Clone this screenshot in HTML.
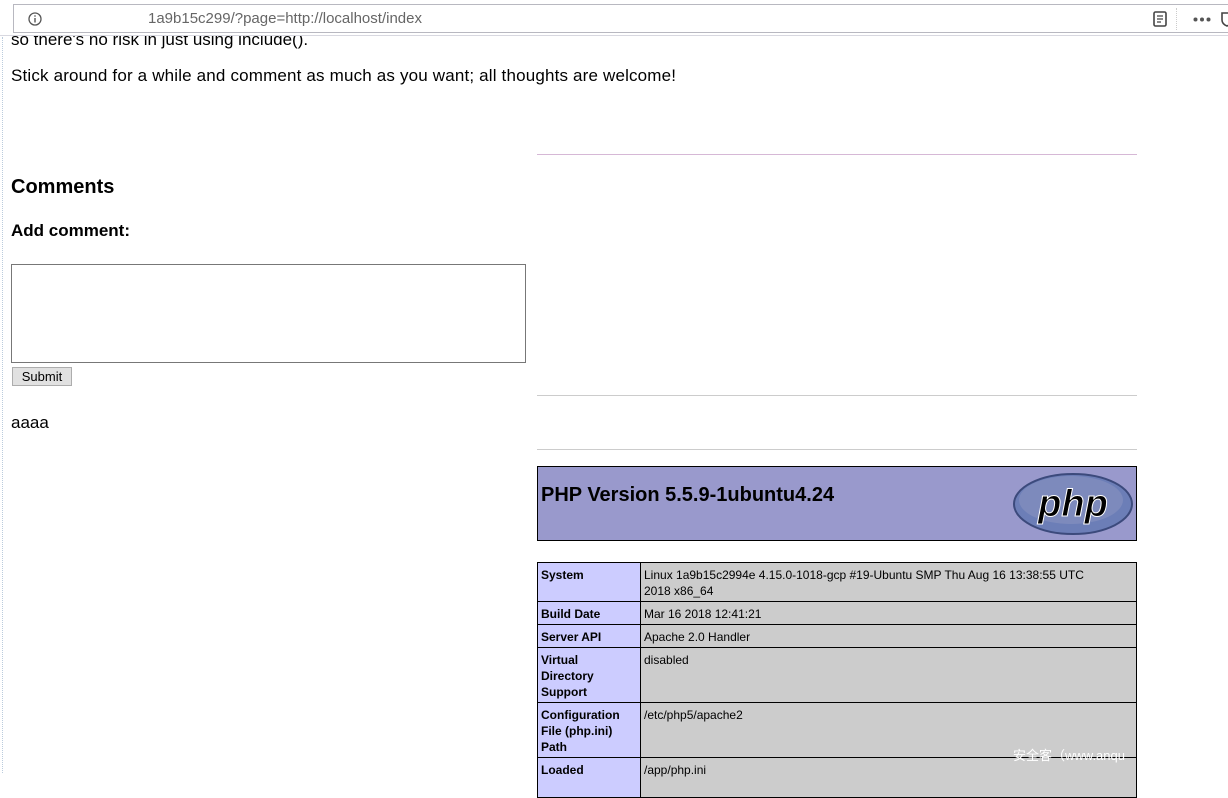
<!DOCTYPE html>
<html><head><meta charset="utf-8"><style>
*{margin:0;padding:0;box-sizing:border-box}
body{width:1228px;height:773px;overflow:hidden;background:#fff;font-family:"Liberation Sans","Noto Sans CJK SC",sans-serif;color:#000;position:relative}
.a{position:absolute;white-space:nowrap}
.bar{position:absolute;left:0;top:0;width:1228px;height:36px;background:#fff;border-bottom:1px solid #d8d8e0}
.url{position:absolute;left:13px;top:4px;width:1215px;height:29px;border:1px solid #b8b8c0;border-right:none;background:#fff}
.hr{position:absolute;left:537px;width:600px;height:1px}
table{position:absolute;left:537px;top:562px;width:600px;border-collapse:collapse;font-size:12px;table-layout:fixed}
td{border:1px solid #000;vertical-align:top;padding:4px 3px 2px 3px;line-height:16px}
td.e{background:#ccccff;font-weight:bold}
td.v{background:#cccccc}
</style></head><body>
<div class="a" style="left:11px;top:30px;font-size:17px">so there's no risk in just using include().</div>
<div class="bar"><div class="url">
<svg style="position:absolute;left:14px;top:7px" width="14" height="14" viewBox="0 0 14 14"><circle cx="7" cy="7" r="6" fill="none" stroke="#555" stroke-width="1.3"/><rect x="6.3" y="6" width="1.4" height="4.5" fill="#555"/><rect x="6.3" y="3.3" width="1.4" height="1.4" fill="#555"/></svg>
<div class="a" style="left:134px;top:5px;font-size:15px;color:#666">1a9b15c299/?page=http://localhost/index</div>
<svg style="position:absolute;left:1139px;top:6px" width="15" height="16" viewBox="0 0 15 16"><rect x="1" y="1" width="12" height="14" rx="1.5" fill="none" stroke="#444" stroke-width="1.6"/><path d="M4 5h6M4 8h6M4 11h4" stroke="#444" stroke-width="1.3"/></svg>
<div class="a" style="left:1162px;top:3px;width:1px;height:22px;border-left:1px dotted #ccc"></div>
<svg style="position:absolute;left:1179px;top:12px" width="18" height="5" viewBox="0 0 18 5"><circle cx="2.5" cy="2.5" r="2" fill="#555"/><circle cx="9" cy="2.5" r="2" fill="#555"/><circle cx="15.5" cy="2.5" r="2" fill="#555"/></svg>
<svg style="position:absolute;left:1207px;top:6px" width="12" height="16" viewBox="0 0 12 16"><path d="M1 2h10v7q0 4-5 6q-5-2-5-6z" fill="none" stroke="#444" stroke-width="1.6"/></svg>
</div></div>
<div class="a" style="left:2px;top:37px;width:1px;height:736px;border-left:1px dotted #bcd"></div>
<div class="a" style="left:11px;top:66px;font-size:17px;letter-spacing:0.17px">Stick around for a while and comment as much as you want; all thoughts are welcome!</div>
<div class="a" style="left:11px;top:176px;font-size:20px;font-weight:bold">Comments</div>
<div class="a" style="left:11px;top:221px;font-size:17px;font-weight:bold">Add comment:</div>
<div class="a" style="left:11px;top:264px;width:515px;height:99px;border:1px solid #777;background:#fff"></div>
<div class="a" style="left:12px;top:367px;width:60px;height:19px;border:1px solid #adadad;background:#e1e1e1;font-size:13px;text-align:center;line-height:17px">Submit</div>
<div class="a" style="left:11px;top:413px;font-size:17px">aaaa</div>
<div class="hr" style="top:154px;background:#d6b8d6"></div>
<div class="hr" style="top:395px;background:#ccc"></div>
<div class="hr" style="top:449px;background:#ccc"></div>
<div class="a" style="left:537px;top:466px;width:600px;height:75px;background:#9999cc;border:1px solid #000"></div>
<div class="a" style="left:541px;top:484px;font-size:20px;font-weight:bold">PHP Version 5.5.9-1ubuntu4.24</div>
<svg style="position:absolute;left:1013px;top:472px" width="121" height="64" viewBox="0 0 121 64"><ellipse cx="60" cy="32" rx="59" ry="30" fill="#6c7eb7" stroke="#3c4a7c" stroke-width="2"/><ellipse cx="58" cy="28" rx="52" ry="24" fill="#8892bf" opacity=".6"/><text x="60" y="44" text-anchor="middle" font-family="Liberation Sans,sans-serif" font-style="italic" font-weight="bold" font-size="38" fill="#000" stroke="#fff" stroke-width="1">php</text></svg>
<table>
<colgroup><col style="width:103px"><col style="width:496px"></colgroup>
<tr style="height:39px"><td class="e">System</td><td class="v">Linux 1a9b15c2994e 4.15.0-1018-gcp #19-Ubuntu SMP Thu Aug 16 13:38:55 UTC<br>2018 x86_64</td></tr>
<tr style="height:23px"><td class="e">Build Date</td><td class="v">Mar 16 2018 12:41:21</td></tr>
<tr style="height:23px"><td class="e">Server API</td><td class="v">Apache 2.0 Handler</td></tr>
<tr style="height:55px"><td class="e">Virtual<br>Directory<br>Support</td><td class="v">disabled</td></tr>
<tr style="height:55px"><td class="e">Configuration<br>File (php.ini)<br>Path</td><td class="v">/etc/php5/apache2</td></tr>
<tr style="height:40px"><td class="e">Loaded</td><td class="v">/app/php.ini</td></tr>
</table>
<div class="a" style="left:1013px;top:745px;font-size:13px;color:#fff">安全客（www.anqu</div>
</body></html>
